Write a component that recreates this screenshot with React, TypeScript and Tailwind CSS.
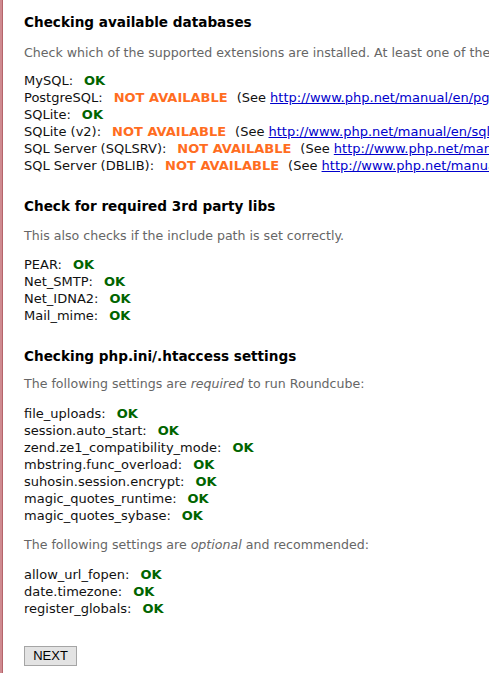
import React from 'react';

type Row = { name: string; ok: boolean; url?: string };

const databases: Row[] = [
  { name: 'MySQL', ok: true },
  { name: 'PostgreSQL', ok: false, url: 'http://www.php.net/manual/en/pgsql.installation.php' },
  { name: 'SQLite', ok: true },
  { name: 'SQLite (v2)', ok: false, url: 'http://www.php.net/manual/en/sqlite.installation.php' },
  { name: 'SQL Server (SQLSRV)', ok: false, url: 'http://www.php.net/manual/en/sqlsrv.installation.php' },
  { name: 'SQL Server (DBLIB)', ok: false, url: 'http://www.php.net/manual/en/mssql.installation.php' },
];

const libs: Row[] = [
  { name: 'PEAR', ok: true },
  { name: 'Net_SMTP', ok: true },
  { name: 'Net_IDNA2', ok: true },
  { name: 'Mail_mime', ok: true },
];

const required: Row[] = [
  { name: 'file_uploads', ok: true },
  { name: 'session.auto_start', ok: true },
  { name: 'zend.ze1_compatibility_mode', ok: true },
  { name: 'mbstring.func_overload', ok: true },
  { name: 'suhosin.session.encrypt', ok: true },
  { name: 'magic_quotes_runtime', ok: true },
  { name: 'magic_quotes_sybase', ok: true },
];

const optional: Row[] = [
  { name: 'allow_url_fopen', ok: true },
  { name: 'date.timezone', ok: true },
  { name: 'register_globals', ok: true },
];

function CheckList({ rows }: { rows: Row[] }) {
  return (
    <div className="flex flex-col">
      {rows.map((r) => (
        <div key={r.name} className="h-[17px] leading-[17px] whitespace-nowrap text-[#111]">
          {r.name}:
          {r.ok ? (
            <span className="ml-[11px] font-bold text-[#006400]">OK</span>
          ) : (
            <>
              <span className="ml-[11px] font-bold text-[#ff6d1f]">NOT AVAILABLE</span>
              <span className="ml-[9px]">
                (See <a className="text-[#0000cc] underline">{r.url}</a>)
              </span>
            </>
          )}
        </div>
      ))}
    </div>
  );
}

function Heading({ children, className = '' }: { children: React.ReactNode; className?: string }) {
  return <h3 className={`h-[18px] leading-[18px] text-[13.6px] font-bold text-black whitespace-nowrap ${className}`}>{children}</h3>;
}

function Note({ children, className = '' }: { children: React.ReactNode; className?: string }) {
  return <p className={`h-[17px] leading-[17px] text-[12.6px] text-[#666] whitespace-nowrap ${className}`}>{children}</p>;
}

export default function App() {
  return (
    <div className="w-[489px] h-[673px] overflow-hidden bg-white flex" style={{ fontFamily: '"DejaVu Sans", Verdana, sans-serif' }}>
      <div className="w-[2px] bg-[#cf8a90] shrink-0" />
      <div className="w-[1px] bg-[#b5646b] shrink-0" />
      <div className="flex-1 flex flex-col pl-[21px] pt-[13px] text-[13px] overflow-hidden">
        <Heading>Checking available databases</Heading>
        <Note className="mt-[13px]">
          Check which of the supported extensions are installed. At least one of them is required.
        </Note>
        <div className="mt-[11px]">
          <CheckList rows={databases} />
        </div>

        <Heading className="mt-[23px]">Check for required 3rd party libs</Heading>
        <Note className="mt-[12px]">This also checks if the include path is set correctly.</Note>
        <div className="mt-[12px]">
          <CheckList rows={libs} />
        </div>

        <Heading className="mt-[23px]">Checking php.ini/.htaccess settings</Heading>
        <Note className="mt-[10px]">
          The following settings are <em>required</em> to run Roundcube:
        </Note>
        <div className="mt-[13px]">
          <CheckList rows={required} />
        </div>
        <Note className="mt-[12px]">
          The following settings are <em>optional</em> and recommended:
        </Note>
        <div className="mt-[13px]">
          <CheckList rows={optional} />
        </div>

        <div className="mt-[29px]">
          <button
            className="h-[20px] w-[53px] border border-[#a5a5a5] bg-[#e3e3e3] text-[13px] leading-[18px] text-black"
            style={{ fontFamily: '"Liberation Sans", Arial, sans-serif' }}
          >
            NEXT
          </button>
        </div>
      </div>
    </div>
  );
}
